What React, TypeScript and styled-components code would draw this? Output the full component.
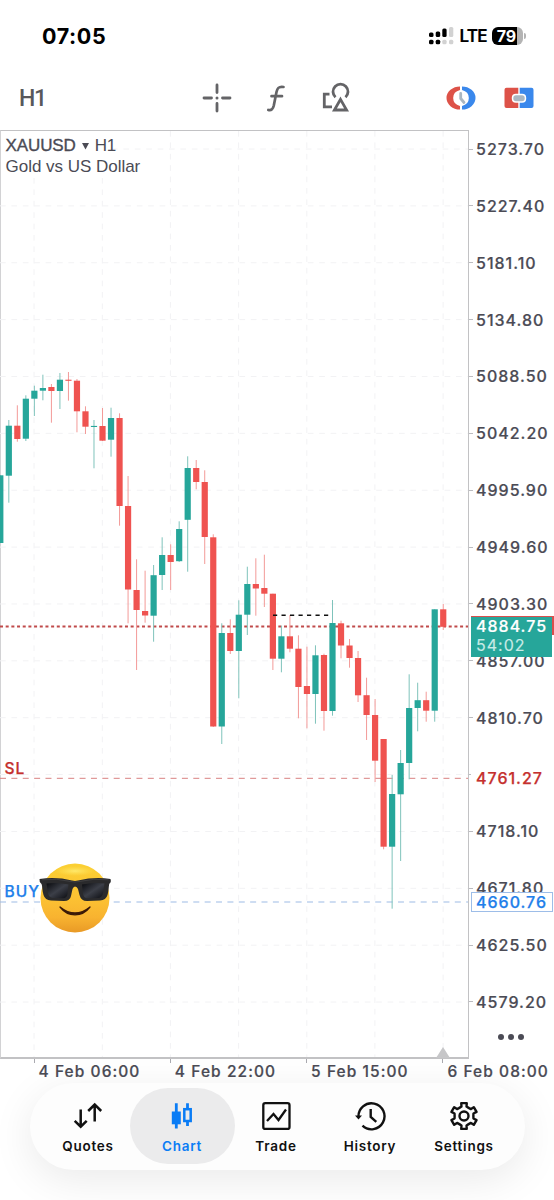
import React from "react";
import styled, { createGlobalStyle } from "styled-components";

const GlobalStyle = createGlobalStyle`
  * { box-sizing: border-box; }
  body { margin: 0; background: #fff; overflow: hidden; }
`;

const Screen = styled.main`
  width: 554px;
  height: 1200px;
  display: flex;
  flex-direction: column;
  background: #fff;
  color: #4b4b55;
  font-family: Inter, "Liberation Sans", sans-serif;
  overflow: hidden;
`;

const StatusBar = styled.header`
  height: 72px;
  flex: none;
  padding: 0 28px 1px 42px;
  display: flex;
  align-items: center;
  justify-content: space-between;
  color: #000;
`;
const Clock = styled.span`
  font-size: 21.5px;
  font-weight: 700;
  letter-spacing: 0.6px;
  line-height: 24px;
`;
const StatusIcons = styled.div`
  display: flex;
  align-items: center;
`;
const Network = styled.span`
  margin-left: 5.5px;
  width: 27.5px;
  font-size: 17px;
  font-weight: 600;
  letter-spacing: -0.7px;
  -webkit-text-stroke: 0.2px #000;
`;
const Battery = styled.div`
  margin-left: 5px;
  width: 31px;
  height: 18px;
  padding-right: 2px;
  border-radius: 6px;
  background: linear-gradient(90deg, #000 0 25px, #b4b4b4 25px);
  color: #fff;
  font-size: 16px;
  font-weight: 700;
  line-height: 18px;
  text-align: center;
`;
const BatteryCap = styled.span`
  width: 2px;
  height: 6px;
  margin-left: 1px;
  border-radius: 0 2px 2px 0;
  background: #b4b4b4;
`;

const Toolbar = styled.nav`
  height: 58px;
  flex: none;
  padding: 0 20px 6px 19px;
  display: flex;
  align-items: center;
  justify-content: space-between;
`;
const Timeframe = styled.span`
  width: 75px;
  font-family: Roboto, "Liberation Sans", sans-serif;
  font-size: 23px;
  font-weight: 500;
  letter-spacing: -1.2px;
  color: #58585c;
`;
const ToolGroup = styled.div<{ $gap: number; $shift?: number }>`
  display: flex;
  gap: ${(p) => p.$gap}px;
  margin-left: ${(p) => p.$shift ?? 0}px;
  svg { display: block; }
`;

const ChartArea = styled.section`
  height: 929px;
  flex: none;
  display: grid;
  grid-template-columns: 469px 1fr;
`;
const Plot = styled.div`
  position: relative;
  border: 1px solid #c2c2c4;
  border-bottom-width: 2px;
  border-left-color: #d2d2d4;
`;
const Drawing = styled.svg`
  position: absolute;
  inset: -1px auto auto -1px;
  display: block;
`;
const Heading = styled.div`
  position: absolute;
  left: 4.5px;
  top: 4px;
  font-family: "Liberation Sans", sans-serif;
  font-size: 17px;
  line-height: 21px;
  letter-spacing: -0.02px;
  white-space: nowrap;
`;
const Symbol = styled.div`
  display: flex;
  align-items: center;
  gap: 5px;
  letter-spacing: -0.35px;
`;
const Ticker = styled.span`
  letter-spacing: -0.1px;
  -webkit-text-stroke: 0.35px #4b4b55;
`;
const OrderLabel = styled.span<{ $top: number; $color: string }>`
  position: absolute;
  left: 3.5px;
  top: ${(p) => p.$top}px;
  font-size: 15.5px;
  line-height: 20px;
  font-weight: 500;
  letter-spacing: 1px;
  color: ${(p) => p.$color};
  -webkit-text-stroke: 0.25px ${(p) => p.$color};
`;

const PriceAxis = styled.div`
  position: relative;
  padding-top: 2.6px;
  height: 929px;
`;
const PriceRow = styled.div`
  height: 56.87px;
  display: flex;
  align-items: center;
  gap: 3px;
  font-size: 16px;
  font-weight: 500;
  letter-spacing: 1px;
  white-space: nowrap;
  -webkit-text-stroke: 0.2px #4b4b55;
  &::before {
    content: "";
    width: 4px;
    height: 1px;
    background: #bcbcc0;
  }
`;
const PriceRows = styled.div`
  margin-top: -12px;
`;
const PriceTag = styled.div<{ $top: number; $color: string; $boxed?: boolean }>`
  position: absolute;
  left: 2px;
  top: ${(p) => p.$top}px;
  width: 82px;
  height: 20px;
  padding-left: 4px;
  border: 1px solid ${(p) => (p.$boxed ? "#9dbde8" : "transparent")};
  background: #fff;
  color: ${(p) => p.$color};
  font-size: 16px;
  font-weight: 500;
  line-height: 18px;
  letter-spacing: 1px;
  -webkit-text-stroke: 0.25px ${(p) => p.$color};
`;
const BidTag = styled.div`
  position: absolute;
  left: 2px;
  top: 486px;
  width: 83px;
  height: 19px;
  background: #d94f4d;
`;
const BidFace = styled.div`
  width: 81px;
  height: 40px;
  margin-top: 1px;
  padding: 0 0 0 5px;
  background: #26a69a;
  color: #fff;
  font-size: 16px;
  font-weight: 500;
  line-height: 19px;
  letter-spacing: 1px;
  -webkit-text-stroke: 0.2px #fff;
`;
const Countdown = styled.div`
  color: #c9ebe6;
  font-weight: 400;
  -webkit-text-stroke: 0.15px #c9ebe6;
`;
const More = styled.div`
  position: absolute;
  left: 29px;
  top: 904px;
  display: flex;
  gap: 4px;
  i {
    width: 6px;
    height: 6px;
    border-radius: 50%;
    background: #4b4b55;
  }
`;

const TimeAxis = styled.div`
  height: 24px;
  flex: none;
  padding-left: 33.5px;
  display: flex;
`;
const TimeCell = styled.div`
  width: 136.3px;
  flex: none;
  display: flex;
  gap: 4px;
  font-size: 15.5px;
  font-weight: 500;
  line-height: 25px;
  letter-spacing: 1.07px;
  white-space: nowrap;
  -webkit-text-stroke: 0.2px #4b4b55;
  &::before {
    content: "";
    width: 1px;
    height: 4px;
    background: #aaaab0;
  }
`;

const TabBar = styled.nav`
  position: relative;
  width: 495px;
  height: 87px;
  flex: none;
  margin-left: 29.5px;
  border-radius: 44px;
  background: #fdfdfd;
  box-shadow: 0 10px 42px rgba(0, 0, 0, 0.085);
  display: flex;
  justify-content: center;
  padding: 5px 2px 6px 0;
`;
const Tab = styled.a<{ $active?: boolean }>`
  width: ${(p) => (p.$active ? 105 : 94)}px;
  margin: 0 ${(p) => (p.$active ? -5.5 : 0)}px;
  border-radius: 38px;
  display: flex;
  flex-direction: column;
  align-items: center;
  padding-top: 12px;
  background: ${(p) => (p.$active ? "#ebebec" : "transparent")};
  color: ${(p) => (p.$active ? "#0a7cf5" : "#111")};
  font-size: 13.5px;
  font-weight: 600;
  line-height: 16px;
  letter-spacing: 0.75px;
  svg { display: block; margin-bottom: 6px; }
`;

/* Each candle: [direction, high, body top, body bottom, low] */
type Candle = ["u" | "d", number, number, number, number];
const candles: Candle[] = [
  ["u", 475.3, 475.3, 543, 543], ["u", 420, 425.7, 475.7, 502.7], ["d", 405.3, 425.7, 439, 441.7],
  ["u", 395.3, 398.7, 438.7, 441], ["u", 385.7, 390.7, 398.7, 416], ["u", 374.7, 388, 390.7, 400.3],
  ["d", 384, 387, 391, 422.7], ["u", 373, 379.7, 391, 409], ["d", 372, 379.7, 380.8, 400.7],
  ["d", 379, 380.7, 411.3, 432.3], ["d", 406.3, 411.3, 426.7, 434], ["u", 420, 425.9, 427, 468.3],
  ["d", 408, 426, 440.7, 441], ["u", 407.7, 418, 439.7, 456.7], ["d", 413.3, 418, 506, 525.7],
  ["d", 476, 506, 589.5, 623.3], ["d", 559.3, 590, 610, 670], ["d", 570.7, 611, 615.5, 622.7],
  ["u", 565, 575.2, 615.7, 641.7], ["u", 537.3, 555, 575, 590], ["d", 544.3, 555, 562, 590],
  ["u", 521.3, 529, 561.2, 562], ["u", 456.3, 468, 519.8, 571.7], ["d", 460, 468, 482, 489.3],
  ["d", 470.3, 482, 537, 564], ["d", 534.3, 537.3, 726.5, 727], ["u", 623.3, 633, 726.5, 744],
  ["d", 619.3, 633, 651, 654], ["u", 600.3, 614.7, 651, 698.3], ["u", 566.7, 584, 614.7, 635],
  ["d", 558.3, 584, 588.5, 615.7], ["d", 554.7, 588, 593.7, 607], ["d", 593.7, 593.7, 658.7, 670],
  ["u", 625.7, 636.3, 658.7, 672.3], ["d", 615, 636.3, 648.7, 652.3], ["d", 635.3, 648.7, 687, 718.3],
  ["d", 646.7, 686, 694, 728.3], ["u", 645.3, 655.3, 694, 723.7], ["d", 653.7, 655, 711, 730.7],
  ["u", 600, 623, 711, 715.7], ["d", 620.7, 623.3, 645.5, 658.3], ["d", 639, 645.5, 658, 667.7],
  ["d", 651, 658, 695.3, 702], ["d", 677.7, 695.2, 715, 740], ["d", 699, 715, 760.7, 782],
  ["d", 739, 739, 846.7, 849.3], ["u", 775, 794, 846.7, 908.7], ["u", 750, 763, 794.3, 861],
  ["u", 674.3, 708, 763, 779.3], ["u", 682.7, 700.2, 708, 731.3], ["d", 691.7, 700.2, 710.7, 721.7],
  ["u", 609.3, 609.3, 710.7, 721.7], ["d", 604, 609.3, 626.8, 630],
];

const prices = [
  "5273.70", "5227.40", "5181.10", "5134.80", "5088.50", "5042.20", "4995.90", "4949.60",
  "4903.30", "4857.00", "4810.70", "", "4718.10", "4671.80", "4625.50", "4579.20",
];
const times = ["4 Feb 06:00", "4 Feb 22:00", "5 Feb 15:00", "6 Feb 08:00"];
const dividers = [34, 102.3, 170.4, 238.6, 306.8, 374.9, 443.1];

const Candles = () => (
  <>
    {candles.map(([dir, high, top, bottom, low], i) => {
      const x = 0.3 + i * 8.518;
      const up = dir === "u";
      return (
        <g key={i}>
          <line x1={x} x2={x} y1={high} y2={low} stroke={up ? "#7fc3bb" : "#f39a98"} strokeWidth={1} />
          <rect x={x - 3.1} y={top} width={6.2} height={bottom - top} fill={up ? "#26a69a" : "#ef5350"} />
        </g>
      );
    })}
  </>
);

const CoolFace = () => (
  <g>
    <circle cx={75} cy={898} r={34.5} fill="url(#face)" />
    <ellipse cx={75} cy={871} rx={20} ry={5} fill="url(#shine)" />
    <path d="M60 907 Q75 919 90 907 Q84 914.8 75 914.8 Q66 914.8 60 907Z" fill="#3c1a08" stroke="#3c1a08" strokeWidth={1.3} strokeLinejoin="round" />
    <path
      d="M39.5 879 Q56 876.5 72 880.5 Q75 881.3 78 880.5 Q95 876.5 110.5 879 Q111.5 882 109.5 883.5 C108.500 885.500 109 890 107.500 895 Q106 900 100 900.500 L87 901 Q81 901 79.500 895 L78 889 Q77 886.500 75 886.500 Q73.500 886.500 72.500 889 L71 896 Q70 901 64 901 L51 900.500 Q45 900 43.500 895 C42 890 42.500 886 41.500 884 Q39 882 39.500 879Z"
      fill="#2a2a2c"
    />
    <path d="M46.500 883.500 Q57 882 68.500 884.500 L67.500 894 Q67 898 63 898.300 L53 898 Q49 897.500 48 893.500Z" fill="url(#lens)" />
    <path d="M82 884.500 Q94 882 104.500 883.500 L103 893 Q102 897.500 98.500 898 L87 898.300 Q84 898 83 894Z" fill="url(#lens)" />
    <path d="M42 879.800 Q57 878 71 881.500 Q75 882.500 79 881.500 Q94 878 108.500 879.800" fill="none" stroke="#484849" strokeWidth={0.7} />
  </g>
);

const PlotDrawing = () => (
  <Drawing width={469} height={929} viewBox="0 130 469 929">
    <defs>
      <linearGradient id="face" x1="0" y1="0" x2="0" y2="1">
        <stop offset="0" stopColor="#fbd033" />
        <stop offset="0.5" stopColor="#fcc233" />
        <stop offset="0.78" stopColor="#f8b330" />
        <stop offset="1" stopColor="#e99a26" />
      </linearGradient>
      <radialGradient id="shine">
        <stop offset="0" stopColor="#fff07a" stopOpacity="0.8" />
        <stop offset="1" stopColor="#ffe55c" stopOpacity="0" />
      </radialGradient>
      <linearGradient id="lens" x1="0" y1="0" x2="1" y2="1">
        <stop offset="0" stopColor="#08090d" />
        <stop offset="0.5" stopColor="#3c3f48" />
        <stop offset="1" stopColor="#0b0c11" />
      </linearGradient>
    </defs>
    <g stroke="#f2f2f4" strokeWidth={1} strokeDasharray="5.7 5.7">
      {prices.map((_, i) => (
        <line key={i} x1={i === 0 ? 112 : 0} x2={468} y1={149 + i * 56.87} y2={149 + i * 56.87} />
      ))}
      {dividers.map((x) => (
        <line key={x} x1={x} x2={x} y1={x < 140 ? 178 : 131} y2={1057} />
      ))}
    </g>
    <line x1={0} x2={468} y1={778.3} y2={778.3} stroke="#d98080" strokeDasharray="6 5.37" />
    <line x1={0} x2={468} y1={902} y2={902} stroke="#9dbbe6" strokeWidth={1.2} strokeDasharray="6 5.37" />
    <line x1={0} x2={468} y1={626.5} y2={626.5} stroke="#c04a4a" strokeWidth={1.8} strokeDasharray="3 2.68" />
    <Candles />
    <line x1={273} x2={329} y1={615.3} y2={615.3} stroke="#111" strokeWidth={1.4} strokeDasharray="4.2 4.3" />
    <CoolFace />
    <path d="M443 1047 L450 1058 H436Z" fill="#c6c6c8" />
  </Drawing>
);

const SignalIcon = () => (
  <svg width={25} height={18} viewBox="0 0 25 18">
    <g fill="#000">
      <rect x={0} y={5.5} width={4.5} height={4.5} rx={1.5} /><rect x={6.7} y={4.500} width={4.500} height={5.5} rx={1.5} />
      <rect x={13.3} y={1.5} width={4.3} height={8.5} rx={1.5} />
      <rect x={0} y={12.7} width={4.5} height={4.5} rx={1.5} /><rect x={6.7} y={12.7} width={4.500} height={4.500} rx={1.5} />
    </g>
    <g fill="#d2d2d2">
      <rect x={20} y={0} width={4.3} height={10} rx={1.5} />
      <rect x={13.3} y={12.7} width={4.3} height={4.5} rx={1.5} /><rect x={20} y={12.7} width={4.3} height={4.5} rx={1.5} />
    </g>
  </svg>
);
const CrosshairIcon = () => (
  <svg width={32} height={32} viewBox="0 0 32 32" stroke="#646467" strokeWidth={2.8} strokeLinecap="round">
    <path d="M16 3V10.500M16 21.500V29M3 16H10.500M21.500 16H29" />
    <circle cx={16} cy={16} r={1.500} fill="#646467" stroke="none" />
  </svg>
);
const FunctionIcon = () => (
  <svg width={32} height={32} viewBox="0 0 32 32" fill="none" stroke="#646467" strokeWidth={2.7} strokeLinecap="round">
    <path d="M8.300 28C11.500 28.800 13 27 13.800 23.500L16.500 10C17.500 5.500 19.500 4.200 23.500 5M11.500 14.200H22" />
  </svg>
);
const ShapesIcon = () => (
  <svg width={32} height={32} viewBox="0 0 32 32" fill="none" stroke="#646467" strokeWidth={2.8}>
    <path d="M9.500 12.200H4.300V24.800H12M15.500 15.200A7.500 7.500 0 1 1 25.500 15.200" />
    <path d="M20.500 17.400L26.600 28H14.400Z" />
  </svg>
);
const ClockTradeIcon = () => (
  <svg width={30} height={28} viewBox="0 0 30 28">
    <path d="M14 2.500A13.500 11.500 0 0 0 14 25.500V22A9.300 8.300 0 0 1 14 6Z" fill="#dd5248" />
    <path d="M16 2.500A13.500 11.500 0 0 1 16 25.500V22A9.300 8.300 0 0 0 16 6Z" fill="#3a88ec" />
    <path d="M14.700 9.500V14.500L18 18.500" fill="none" stroke="#aab7c2" strokeWidth={2.8} strokeLinecap="round" strokeLinejoin="round" />
  </svg>
);
const OneClickIcon = () => (
  <svg width={30} height={28} viewBox="0 0 30 28">
    <path d="M2.500 3.800H14.300V24H2.500Q.5 24 .5 22V5.800Q.5 3.800 2.500 3.800Z" fill="#dd5248" />
    <path d="M15.700 3.800H27.500Q29.500 3.800 29.500 5.800V22Q29.500 24 27.500 24H15.700Z" fill="#3a88ec" />
    <rect x={7.800} y={9.800} width={14.400} height={9} rx={4} fill="#fff" />
    <rect x={9.300} y={11.300} width={11.400} height={6} rx={2.700} fill="#aab7c2" />
  </svg>
);

const tabProps = { width: 32, height: 32, viewBox: "0 0 32 32", fill: "none", stroke: "currentColor" };
const QuotesIcon = () => (
  <svg {...tabProps} strokeWidth={2.5}>
    <path d="M8.700 9.500V26.500M2.700 20.800L8.700 26.700L14.700 20.800M22.700 21.500V4.500M16.200 11L22.700 4.600L29.200 11" />
  </svg>
);
const ChartIcon = () => (
  <svg {...tabProps} strokeWidth={2.800}>
    <path d="M10.300 3.200V28.500M21.500 3.200V8M21.500 21V26" />
    <rect x={5.800} y={11.500} width={9} height={12.800} fill="currentColor" stroke="none" />
    <rect x={18.300} y={9.200} width={6.400} height={11.800} strokeWidth={2.500} />
  </svg>
);
const TradeIcon = () => (
  <svg {...tabProps} strokeWidth={2.3}>
    <rect x={3.300} y={3.200} width={26.200} height={25.700} rx={2} />
    <path d="M7 21L13.500 14L18.500 20L26 9.500" />
  </svg>
);
const HistoryIcon = () => (
  <svg {...tabProps} strokeWidth={2.4}>
    <path d="M4.500 17A13 13 0 1 1 8.500 25.700M16.700 9V17L22.300 21.800" />
    <path d="M1 15.500H8L4.500 19.500Z" fill="currentColor" stroke="none" />
  </svg>
);
const SettingsIcon = () => {
  const teeth = Array.from({ length: 6 }, (_, k) =>
    [[-27, 9.4], [-15, 9.8], [-12, 13.2], [12, 13.2], [15, 9.8], [27, 9.4]].map(([offset, r]) => {
      const a = ((k * 60 - 90 + offset) * Math.PI) / 180;
      return `${(16 + r * Math.cos(a)).toFixed(2)},${(16 + r * Math.sin(a)).toFixed(2)}`;
    }).join(" ")
  ).join(" ");
  return (
    <svg {...tabProps} strokeWidth={2.4} strokeLinejoin="round">
      <polygon points={teeth} />
      <circle cx={16} cy={16} r={4.500} />
    </svg>
  );
};

const tabs = [
  { label: "Quotes", Icon: QuotesIcon },
  { label: "Chart", Icon: ChartIcon, active: true },
  { label: "Trade", Icon: TradeIcon },
  { label: "History", Icon: HistoryIcon },
  { label: "Settings", Icon: SettingsIcon },
];

export default function App() {
  return (
    <Screen>
      <GlobalStyle />
      <StatusBar>
        <Clock>07:05</Clock>
        <StatusIcons>
          <SignalIcon />
          <Network>LTE</Network>
          <Battery>79</Battery>
          <BatteryCap />
        </StatusIcons>
      </StatusBar>
      <Toolbar>
        <Timeframe>H1</Timeframe>
        <ToolGroup $gap={27.5} $shift={13}>
          <CrosshairIcon />
          <FunctionIcon />
          <ShapesIcon />
        </ToolGroup>
        <ToolGroup $gap={28.5}>
          <ClockTradeIcon />
          <OneClickIcon />
        </ToolGroup>
      </Toolbar>
      <ChartArea>
        <Plot>
          <PlotDrawing />
          <Heading>
            <Symbol>
              <Ticker>XAUUSD</Ticker>
              <svg width={9} height={8} viewBox="0 0 9 8"><path d="M1 1H8L4.500 7.500Z" fill="#4b4b55" /></svg>
              <span>H1</span>
            </Symbol>
            <div>Gold vs US Dollar</div>
          </Heading>
          <OrderLabel $top={628} $color="#c5302e">SL</OrderLabel>
          <OrderLabel $top={751} $color="#1f80ea">BUY</OrderLabel>
        </Plot>
        <PriceAxis>
          <PriceRows>
            {prices.map((price, i) => <PriceRow key={i}>{price}</PriceRow>)}
          </PriceRows>
          <BidTag>
            <BidFace>
              <div>4884.75</div>
              <Countdown>54:02</Countdown>
            </BidFace>
          </BidTag>
          <PriceTag $top={638} $color="#c5302e">4761.27</PriceTag>
          <PriceTag $top={762} $color="#1f80ea" $boxed>4660.76</PriceTag>
          <More><i /><i /><i /></More>
        </PriceAxis>
      </ChartArea>
      <TimeAxis>
        {times.map((time) => <TimeCell key={time}>{time}</TimeCell>)}
      </TimeAxis>
      <TabBar>
        {tabs.map(({ label, Icon, active }) => (
          <Tab key={label} $active={active}>
            <Icon />
            {label}
          </Tab>
        ))}
      </TabBar>
    </Screen>
  );
}
